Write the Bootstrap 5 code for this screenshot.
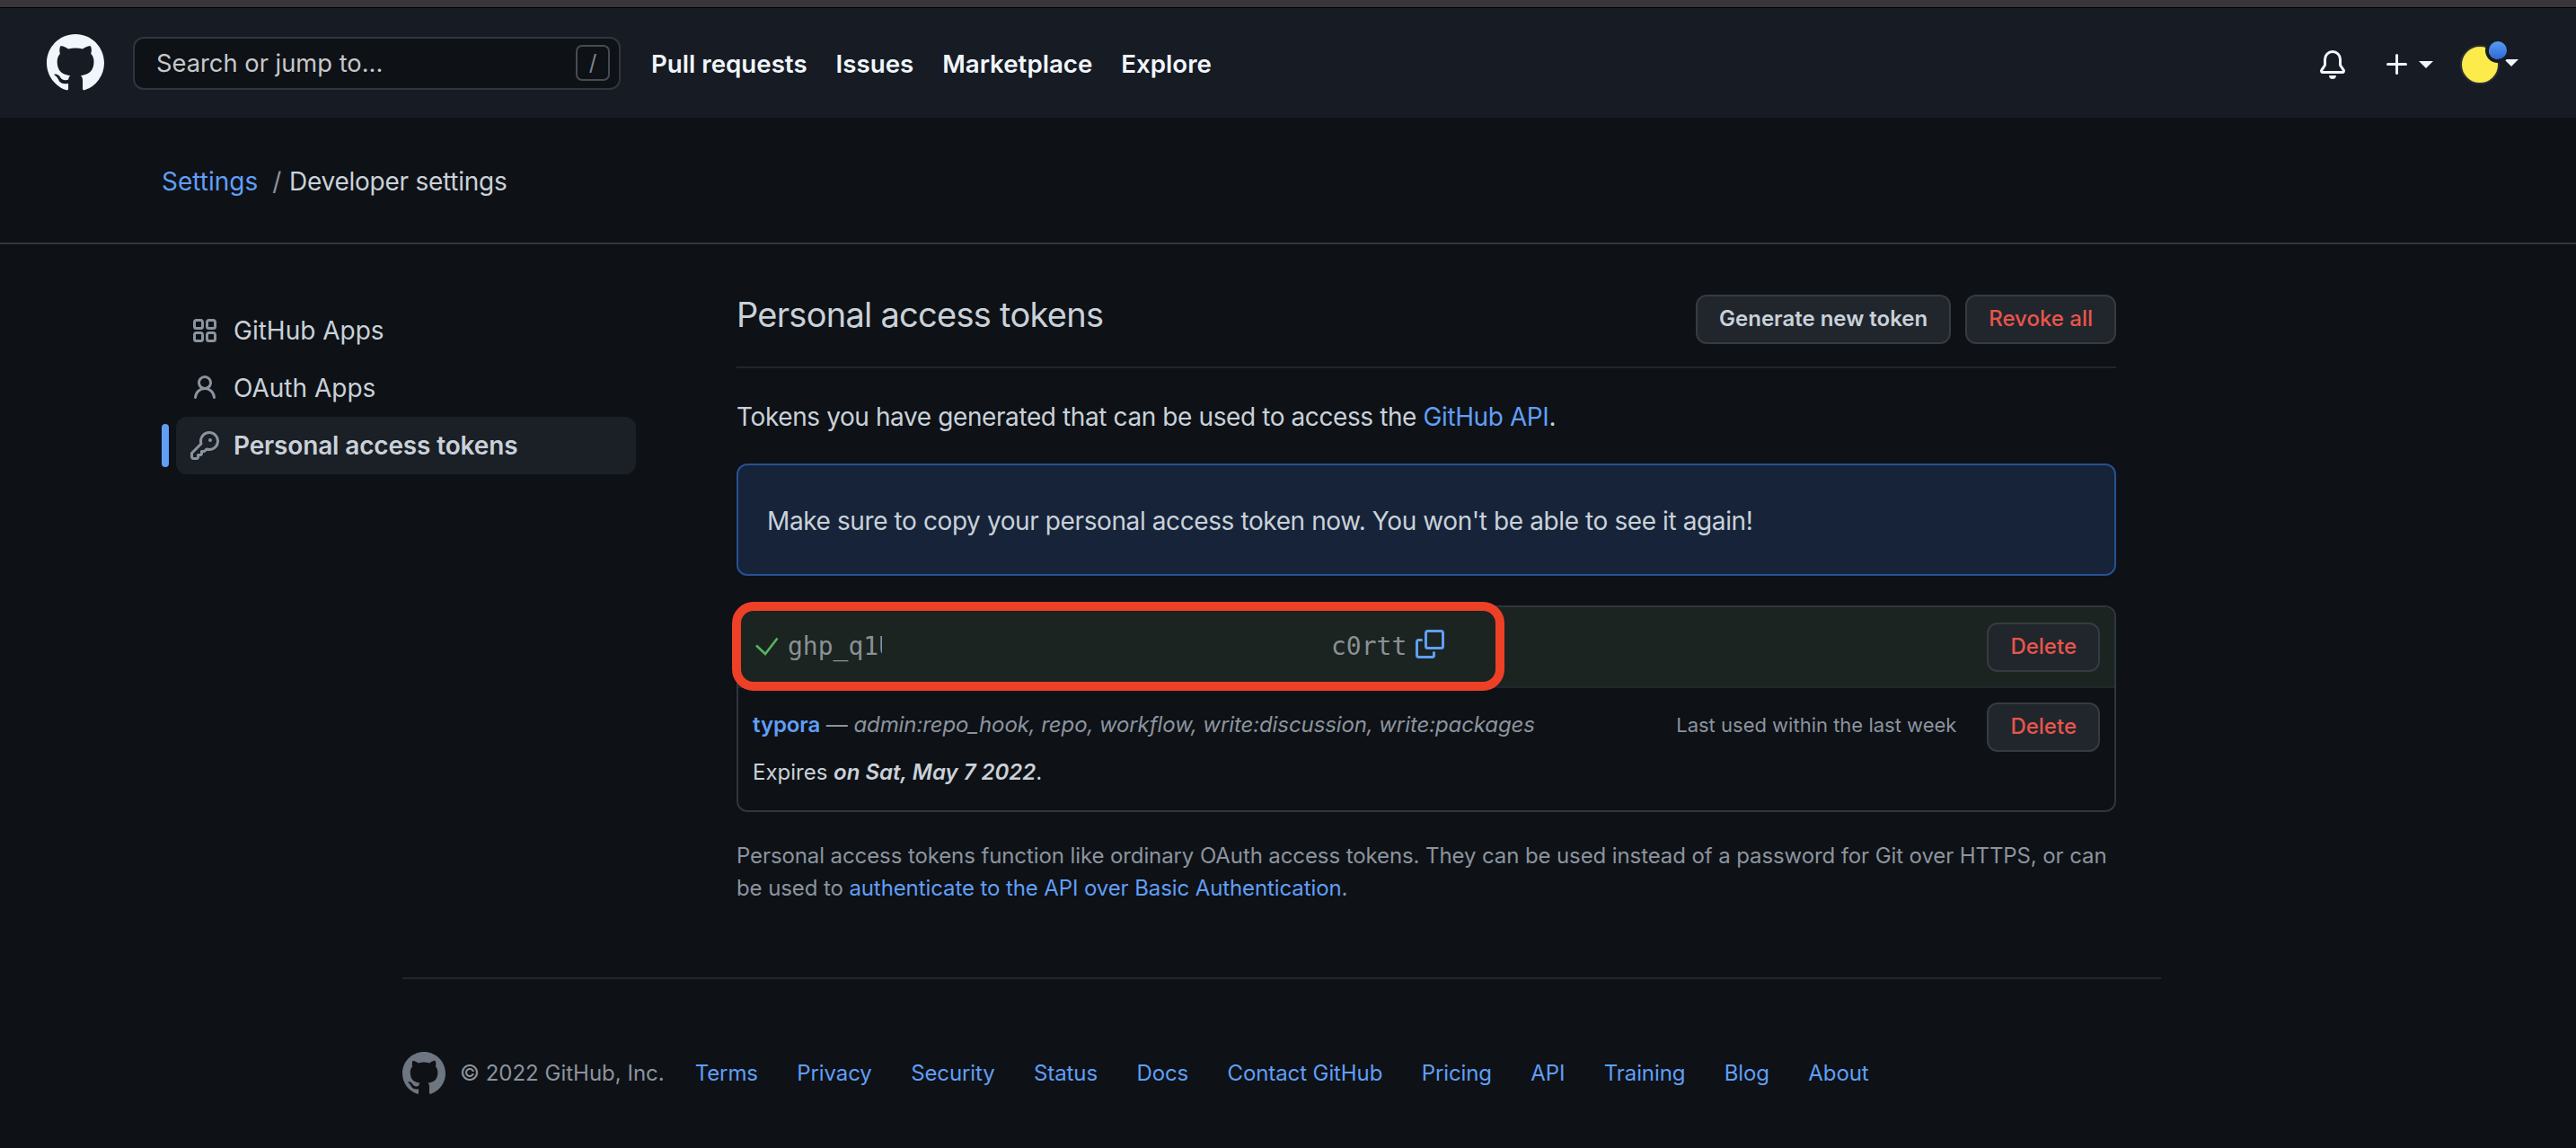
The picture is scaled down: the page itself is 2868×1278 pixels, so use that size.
<!DOCTYPE html>
<html lang="en">
<head>
  <meta charset="UTF-8" />
  <meta name="viewport" content="width=device-width, initial-scale=1">
  <title>Personal access tokens</title>
  <!-- Bootstrap CSS -->
  <link href="https://cdn.jsdelivr.net/npm/bootstrap@5.3.0/dist/css/bootstrap.min.css" rel="stylesheet" />
  <style>
    :root {
      --gh-bg: #0e1116;
      --gh-head: #171b23;
      --gh-line: #30363d;
      --gh-text: #c9d1d9;
      --gh-muted: #8b949e;
      --gh-link: #609ff6;
      --gh-red: #e8554b;
    }
    html, body {
      height: 100%;
    }
    body {
      font-family: "Inter", "Liberation Sans", sans-serif;
      background: var(--gh-bg);
      color: var(--gh-text);
      font-size: 28px;
      line-height: 42px;
      overflow: hidden;
      -webkit-font-smoothing: antialiased;
    }
    a {
      color: var(--gh-link);
      text-decoration: none;
    }
    svg {
      fill: currentColor;
      flex: none;
      display: block;
    }
    /* Top window strip and header */
    .top-strip {
      height: 9px;
      background: #38363b;
      border-bottom: 1px solid #000;
    }
    .gh-head {
      height: 122px;
      background: var(--gh-head);
      padding: 0 64px 0 52px;
      flex-wrap: nowrap;
    }
    .gh-mark {
      color: #f0f6fc;
    }
    .search-box {
      width: 543px;
      height: 59px;
      margin-left: 32px;
      padding: 0 10px 0 24px;
      background: var(--gh-bg);
      border: 2px solid var(--gh-line);
      border-radius: 12px;
      color: #c6c8ca;
      font-size: 27.3px;
    }
    .search-box > span:first-child {
      padding-top: 2px;
    }
    .slash-key {
      width: 38px;
      height: 40px;
      border: 2px solid #484c52;
      border-radius: 7px;
      color: #7d8590;
      font-size: 24px;
      line-height: 36px;
      text-align: center;
    }
    .head-links {
      margin-left: 34px;
      gap: 32px;
      padding-top: 2px;
    }
    .head-links a {
      color: #f0f6fc;
      font-weight: 600;
      font-size: 27.7px;
    }
    .head-right {
      color: #f0f6fc;
      margin-top: 4px;
    }
    .plus-mark {
      margin-left: 40px;
    }
    .down-caret {
      width: 0;
      height: 0;
      border-left: 8px solid transparent;
      border-right: 8px solid transparent;
      border-top: 8px solid #f0f6fc;
    }
    .avatar-wrap {
      width: 44px;
      height: 44px;
      position: relative;
      margin: 0 5px 0 30px;
    }
    .avatar-disc {
      width: 44px;
      height: 44px;
      border-radius: 50%;
      background: #fdea4b;
      border: 2px solid #2b3037;
    }
    .avatar-dot {
      position: absolute;
      top: -4px;
      left: 32px;
      width: 20px;
      height: 20px;
      border-radius: 50%;
      background: linear-gradient(#5b9cf0, #2a68d8);
      box-shadow: 0 0 0 4px var(--gh-head);
    }
    .avatar-caret {
      margin-top: -4px;
    }
    /* Breadcrumb band */
    .crumb-band {
      height: 141px;
      padding: 2px 0 0 180px;
      border-bottom: 2px solid var(--gh-line);
    }
    .crumb-band .breadcrumb {
      margin: 0;
    }
    .crumb-band .breadcrumb-item {
      font-size: 28px;
      color: var(--gh-text);
      padding-left: 16px;
      letter-spacing: -0.25px;
    }
    .crumb-band .breadcrumb-item:first-child {
      padding-left: 0;
      letter-spacing: 0;
    }
    .crumb-band .breadcrumb-item + .breadcrumb-item::before {
      color: var(--gh-muted);
      padding-right: 9px;
    }
    /* Sidebar */
    .side-col {
      width: 528px;
      margin-left: 180px;
      padding: 64px 0 0 16px;
      flex: none;
    }
    .side-item {
      height: 64px;
      padding: 0 16px;
      gap: 16px;
      background: transparent;
      border: 0;
      border-radius: 12px;
      color: var(--gh-text);
      position: relative;
    }
    .side-item svg {
      color: var(--gh-muted);
    }
    .side-item.is-current {
      background: #1b1f26;
      font-weight: 600;
      letter-spacing: -0.15px;
      color: var(--gh-text);
    }
    .side-item.is-current::before {
      content: "";
      position: absolute;
      left: -16px;
      top: 8px;
      width: 8px;
      height: 48px;
      border-radius: 6px;
      background: var(--gh-link);
    }
    /* Main column */
    .main-col {
      width: 1536px;
      margin-left: 112px;
      padding-top: 56px;
      flex: none;
    }
    .title-row {
      height: 82px;
      padding-bottom: 25px;
      border-bottom: 2px solid #21262d;
    }
    .page-title {
      font-size: 38px;
      line-height: 44px;
      font-weight: 400;
      letter-spacing: -0.73px;
      margin: 0;
      color: var(--gh-text);
    }
    .gh-btn {
      height: 55px;
      padding: 0 24px;
      font-size: 24px;
      line-height: 50px;
      font-weight: 600;
      color: var(--gh-text);
      background: #21262d;
      border: 2px solid #363b42;
      border-radius: 12px;
    }
    .gh-btn.is-danger {
      color: var(--gh-red);
      font-weight: 500;
    }
    .lead-text {
      margin: 33px 0 0;
      letter-spacing: -0.4px;
    }
    .flash-box {
      margin: 31px 0 0;
      padding: 40.5px 32px 38.5px;
      background: #162339;
      border: 2px solid #285191;
      border-radius: 12px;
      color: var(--gh-text);
      letter-spacing: -0.4px;
    }
    .token-card {
      margin-top: 33px;
      height: 230px;
      position: relative;
      background: transparent;
      border: 2px solid var(--gh-line);
      border-radius: 12px;
    }
    .token-new {
      height: 90px;
      padding: 0 16px;
      background: #1b2420;
      border-bottom: 2px solid #21262d;
      border-radius: 10px 10px 0 0;
    }
    .check-mark {
      fill: none;
      stroke: #56b45f;
      stroke-width: 2.6;
    }
    .mono-text {
      font-family: "DejaVu Sans Mono", "Liberation Mono", monospace;
      font-size: 28px;
      color: #8b9096;
      white-space: nowrap;
    }
    .token-clip {
      width: 105px;
      margin-left: 7px;
      overflow: hidden;
    }
    .token-tail {
      margin-left: 500px;
    }
    .copy-mark {
      color: var(--gh-link);
      margin-left: 10px;
      margin-top: -6px;
    }
    .token-old {
      padding: 16px;
      font-size: 24px;
      line-height: 36px;
    }
    .token-old strong {
      font-weight: 600;
    }
    .scope-line {
      padding-top: 7px;
      letter-spacing: -0.1px;
    }
    .scope-text {
      color: var(--gh-muted);
    }
    .used-text {
      color: var(--gh-muted);
      font-size: 22px;
      margin-right: 34px;
      padding-top: 7px;
    }
    .expire-line {
      margin-top: 5px;
    }
    .help-text {
      margin: 31px 0 0;
      font-size: 24px;
      line-height: 36px;
      color: var(--gh-muted);
      letter-spacing: -0.1px;
    }
    /* Red annotation over the new token */
    .red-frame {
      position: absolute;
      left: -7px;
      top: -6px;
      width: 860px;
      height: 99px;
      border: 10px solid #ee4026;
      border-radius: 24px;
      pointer-events: none;
    }
    /* Footer */
    .foot-wrap {
      width: 1958px;
      margin: 81px 0 0 448px;
      padding-top: 81px;
      border-top: 2px solid #21262d;
      font-size: 24px;
      line-height: 36px;
      color: var(--gh-muted);
    }
    .foot-mark {
      color: #6e7681;
    }
    .foot-links {
      margin-left: 34px;
      gap: 43.4px;
      letter-spacing: -0.1px;
    }
  </style>
</head>
<body>
  <div class="top-strip"></div>

  <!-- Header -->
  <nav class="navbar gh-head">
    <div class="d-flex align-items-center flex-grow-1">
      <a class="gh-mark" href="#">
        <svg width="64" height="64" viewBox="0 0 16 16"><path d="M8 0C3.58 0 0 3.58 0 8c0 3.54 2.29 6.53 5.47 7.59.4.07.55-.17.55-.38 0-.19-.01-.82-.01-1.49-2.01.37-2.53-.49-2.69-.94-.09-.23-.48-.94-.82-1.13-.28-.15-.68-.52-.01-.53.63-.01 1.08.58 1.23.82.72 1.21 1.87.87 2.33.66.07-.52.28-.87.51-1.07-1.78-.2-3.64-.89-3.64-3.95 0-.87.31-1.59.82-2.15-.08-.2-.36-1.02.08-2.12 0 0 .67-.21 2.2.82.64-.18 1.32-.27 2-.27.68 0 1.36.09 2 .27 1.53-1.04 2.2-.82 2.2-.82.44 1.1.16 1.92.08 2.12.51.56.82 1.27.82 2.15 0 3.07-1.87 3.75-3.65 3.95.29.25.54.73.54 1.48 0 1.07-.01 1.93-.01 2.2 0 .21.15.46.55.38A8.013 8.013 0 0016 8c0-4.42-3.58-8-8-8z"/></svg>
      </a>
      <div class="search-box d-flex align-items-center justify-content-between">
        <span>Search or jump to...</span>
        <span class="slash-key">/</span>
      </div>
      <div class="head-links d-flex">
        <a href="#">Pull requests</a>
        <a href="#">Issues</a>
        <a href="#">Marketplace</a>
        <a href="#">Explore</a>
      </div>
      <div class="head-right d-flex align-items-center ms-auto">
        <svg width="32" height="32" viewBox="0 0 16 16"><path d="M8 16a2 2 0 001.985-1.75c.017-.137-.097-.25-.235-.25h-3.5c-.138 0-.252.113-.235.25A2 2 0 008 16z"/><path fill-rule="evenodd" d="M8 1.5A3.5 3.5 0 004.5 5v2.947c0 .346-.102.683-.294.97l-1.703 2.556a.018.018 0 00-.003.01l.001.006c0 .002.002.004.004.006a.017.017 0 00.006.004l.007.001h10.964l.007-.001a.018.018 0 00.006-.004.016.016 0 00.004-.006l.001-.007a.017.017 0 00-.003-.01l-1.703-2.554a1.75 1.75 0 01-.294-.97V5A3.5 3.5 0 008 1.5zM3 5a5 5 0 0110 0v2.947c0 .05.015.098.042.139l1.703 2.555A1.518 1.518 0 0113.482 13H2.518a1.518 1.518 0 01-1.263-2.36l1.703-2.554A.25.25 0 003 7.947V5z"/></svg>
        <svg class="plus-mark" width="32" height="32" viewBox="0 0 16 16"><path d="M7.75 2a.75.75 0 01.75.75V7h4.25a.75.75 0 110 1.5H8.5v4.25a.75.75 0 11-1.5 0V8.5H2.75a.75.75 0 010-1.5H7V2.75A.75.75 0 017.75 2z"/></svg>
        <span class="down-caret ms-2"></span>
        <div class="avatar-wrap">
          <div class="avatar-disc"></div>
          <div class="avatar-dot"></div>
        </div>
        <span class="down-caret avatar-caret"></span>
      </div>
    </div>
  </nav>

  <!-- Breadcrumb -->
  <div class="crumb-band d-flex align-items-center">
    <ol class="breadcrumb">
      <li class="breadcrumb-item"><a href="#">Settings</a></li>
      <li class="breadcrumb-item active text-reset">Developer settings</li>
    </ol>
  </div>

  <div class="d-flex">
    <!-- Sidebar -->
    <div class="side-col">
      <div class="list-group">
        <a href="#" class="side-item d-flex align-items-center">
          <svg width="32" height="32" viewBox="0 0 16 16"><path fill-rule="evenodd" d="M1.5 3.25c0-.966.784-1.75 1.75-1.75h2.5c.966 0 1.75.784 1.75 1.75v2.5A1.75 1.75 0 015.75 7.5h-2.5A1.75 1.75 0 011.5 5.75v-2.5zM3.25 3a.25.25 0 00-.25.25v2.5c0 .138.112.25.25.25h2.5A.25.25 0 006 5.75v-2.5A.25.25 0 005.75 3h-2.5zM1.5 10.25c0-.966.784-1.75 1.75-1.75h2.5c.966 0 1.75.784 1.75 1.75v2.5a1.75 1.75 0 01-1.75 1.75h-2.5a1.75 1.75 0 01-1.75-1.75v-2.5zM3.25 10a.25.25 0 00-.25.25v2.5c0 .138.112.25.25.25h2.5a.25.25 0 00.25-.25v-2.5a.25.25 0 00-.25-.25h-2.5zM8.5 3.25c0-.966.784-1.75 1.75-1.75h2.5c.966 0 1.75.784 1.75 1.75v2.5a1.75 1.75 0 01-1.75 1.75h-2.5A1.75 1.75 0 018.5 5.75v-2.5zM10.25 3a.25.25 0 00-.25.25v2.5c0 .138.112.25.25.25h2.5a.25.25 0 00.25-.25v-2.5a.25.25 0 00-.25-.25h-2.5zM8.5 10.25c0-.966.784-1.75 1.75-1.75h2.5c.966 0 1.75.784 1.75 1.75v2.5a1.75 1.75 0 01-1.75 1.75h-2.5a1.75 1.75 0 01-1.75-1.75v-2.5zM10.25 10a.25.25 0 00-.25.25v2.5c0 .138.112.25.25.25h2.5a.25.25 0 00.25-.25v-2.5a.25.25 0 00-.25-.25h-2.5z"/></svg>
          GitHub Apps
        </a>
        <a href="#" class="side-item d-flex align-items-center">
          <svg width="32" height="32" viewBox="0 0 16 16"><path fill-rule="evenodd" d="M10.5 5a2.5 2.5 0 11-5 0 2.5 2.5 0 015 0zm.061 3.073a4 4 0 10-5.123 0 6.004 6.004 0 00-3.431 5.142.75.75 0 001.498.07 4.5 4.5 0 018.99 0 .75.75 0 101.498-.07 6.005 6.005 0 00-3.432-5.142z"/></svg>
          OAuth Apps
        </a>
        <a href="#" class="side-item is-current d-flex align-items-center">
          <svg width="32" height="32" viewBox="0 0 16 16"><path fill-rule="evenodd" d="M6.5 5.5a4 4 0 112.731 3.795.75.75 0 00-.768.18L7.44 10.5H6.25a.75.75 0 00-.75.75v1.19l-.06.06H4.25a.75.75 0 00-.75.75v1.19l-.06.06H1.75a.25.25 0 01-.25-.25v-1.69l5.024-5.023a.75.75 0 00.181-.768A3.995 3.995 0 016.5 5.5zm4-5.5a5.5 5.5 0 00-5.348 6.788L.22 11.72a.75.75 0 00-.22.53v2C0 15.216.784 16 1.75 16h2a.75.75 0 00.53-.22l.5-.5a.75.75 0 00.22-.53V14h.75a.75.75 0 00.53-.22l.5-.5a.75.75 0 00.22-.53V12h.75a.75.75 0 00.53-.22l.932-.932A5.5 5.5 0 1010.5 0zm.5 6a1 1 0 100-2 1 1 0 000 2z"/></svg>
          Personal access tokens
        </a>
      </div>
    </div>

    <!-- Main -->
    <div class="main-col">
      <div class="title-row d-flex justify-content-between align-items-start">
        <h2 class="page-title">Personal access tokens</h2>
        <div class="d-flex gap-3">
          <a href="#" class="btn gh-btn">Generate new token</a>
          <a href="#" class="btn gh-btn is-danger">Revoke all</a>
        </div>
      </div>

      <p class="lead-text">Tokens you have generated that can be used to access the <a href="#">GitHub API</a>.</p>

      <div class="alert flash-box">Make sure to copy your personal access token now. You won't be able to see it again!</div>

      <div class="card token-card">
        <div class="token-new d-flex align-items-center">
          <svg class="check-mark" width="32" height="32" viewBox="0 0 32 32"><path d="M4 14.5L14 24L27.5 6.5"/></svg>
          <span class="mono-text token-clip">ghp_q1Uw</span>
          <span class="mono-text token-tail">c0rtt</span>
          <svg class="copy-mark" width="32" height="32" viewBox="0 0 16 16"><path fill-rule="evenodd" d="M0 6.75C0 5.784.784 5 1.75 5h1.5a.75.75 0 010 1.5h-1.5a.25.25 0 00-.25.25v7.5c0 .138.112.25.25.25h7.5a.25.25 0 00.25-.25v-1.5a.75.75 0 011.5 0v1.5A1.75 1.75 0 019.25 16h-7.5A1.75 1.75 0 010 14.25v-7.5z"/><path fill-rule="evenodd" d="M5 1.75C5 .784 5.784 0 6.75 0h7.5C15.216 0 16 .784 16 1.75v7.5A1.75 1.75 0 0114.25 11h-7.5A1.75 1.75 0 015 9.25v-7.5zm1.75-.25a.25.25 0 00-.25.25v7.5c0 .138.112.25.25.25h7.5a.25.25 0 00.25-.25v-7.5a.25.25 0 00-.25-.25h-7.5z"/></svg>
          <a href="#" class="btn gh-btn is-danger ms-auto">Delete</a>
        </div>
        <div class="token-old">
          <div class="d-flex justify-content-between align-items-start">
            <div class="scope-line">
              <a href="#"><strong>typora</strong></a>
              <span class="scope-text">&mdash; <em>admin:repo_hook, repo, workflow, write:discussion, write:packages</em></span>
            </div>
            <div class="d-flex align-items-start">
              <span class="used-text">Last used within the last week</span>
              <a href="#" class="btn gh-btn is-danger">Delete</a>
            </div>
          </div>
          <div class="expire-line">Expires <strong><em>on Sat, May 7 2022</em></strong>.</div>
        </div>
        <div class="red-frame"></div>
      </div>

      <p class="help-text">Personal access tokens function like ordinary OAuth access tokens. They can be used instead of a password for Git over HTTPS, or can be used to <a href="#">authenticate to the API over Basic Authentication</a>.</p>
    </div>
  </div>

  <!-- Footer -->
  <div class="foot-wrap d-flex align-items-center">
    <svg class="foot-mark me-3" width="48" height="48" viewBox="0 0 16 16"><path d="M8 0C3.58 0 0 3.58 0 8c0 3.54 2.29 6.53 5.47 7.59.4.07.55-.17.55-.38 0-.19-.01-.82-.01-1.49-2.01.37-2.53-.49-2.69-.94-.09-.23-.48-.94-.82-1.13-.28-.15-.68-.52-.01-.53.63-.01 1.08.58 1.23.82.72 1.21 1.87.87 2.33.66.07-.52.28-.87.51-1.07-1.78-.2-3.64-.89-3.64-3.95 0-.87.31-1.59.82-2.15-.08-.2-.36-1.02.08-2.12 0 0 .67-.21 2.2.82.64-.18 1.32-.27 2-.27.68 0 1.36.09 2 .27 1.53-1.04 2.2-.82 2.2-.82.44 1.1.16 1.92.08 2.12.51.56.82 1.27.82 2.15 0 3.07-1.87 3.75-3.65 3.95.29.25.54.73.54 1.48 0 1.07-.01 1.93-.01 2.2 0 .21.15.46.55.38A8.013 8.013 0 0016 8c0-4.42-3.58-8-8-8z"/></svg>
    <span>&copy; 2022 GitHub, Inc.</span>
    <div class="foot-links d-flex">
      <a href="#">Terms</a>
      <a href="#">Privacy</a>
      <a href="#">Security</a>
      <a href="#">Status</a>
      <a href="#">Docs</a>
      <a href="#">Contact GitHub</a>
      <a href="#">Pricing</a>
      <a href="#">API</a>
      <a href="#">Training</a>
      <a href="#">Blog</a>
      <a href="#">About</a>
    </div>
  </div>

  <!-- Bootstrap JS Bundle -->
  <script src="https://cdn.jsdelivr.net/npm/bootstrap@5.3.0/dist/js/bootstrap.bundle.min.js"></script>
</body>
</html>
